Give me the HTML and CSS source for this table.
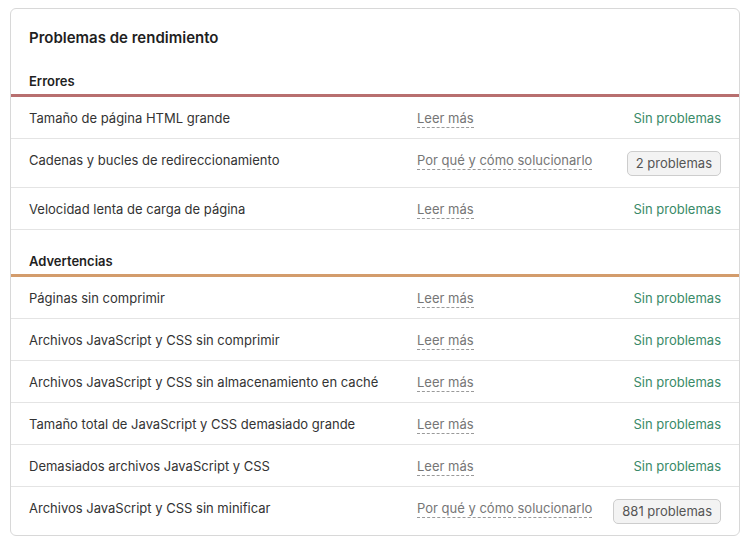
FILE: index.html
```html
<!DOCTYPE html>
<html lang="es">
<head>
<meta charset="utf-8">
<link rel="stylesheet" href="styles.css">
</head>
<body>
<div class="card">
  <h1 class="title">Problemas de rendimiento</h1>

  <div class="section-head errors">Errores</div>
  <div class="row">
    <div class="name">Tamaño de página HTML grande</div>
    <div class="link"><span>Leer más</span></div>
    <div class="status ok">Sin problemas</div>
  </div>
  <div class="row tall">
    <div class="name">Cadenas y bucles de redireccionamiento</div>
    <div class="link"><span>Por qué y cómo solucionarlo</span></div>
    <div class="status"><span class="badge">2 problemas</span></div>
  </div>
  <div class="row">
    <div class="name">Velocidad lenta de carga de página</div>
    <div class="link"><span>Leer más</span></div>
    <div class="status ok">Sin problemas</div>
  </div>

  <div class="section-head warnings">Advertencias</div>
  <div class="row">
    <div class="name">Páginas sin comprimir</div>
    <div class="link"><span>Leer más</span></div>
    <div class="status ok">Sin problemas</div>
  </div>
  <div class="row">
    <div class="name">Archivos JavaScript y CSS sin comprimir</div>
    <div class="link"><span>Leer más</span></div>
    <div class="status ok">Sin problemas</div>
  </div>
  <div class="row">
    <div class="name">Archivos JavaScript y CSS sin almacenamiento en caché</div>
    <div class="link"><span>Leer más</span></div>
    <div class="status ok">Sin problemas</div>
  </div>
  <div class="row">
    <div class="name">Tamaño total de JavaScript y CSS demasiado grande</div>
    <div class="link"><span>Leer más</span></div>
    <div class="status ok">Sin problemas</div>
  </div>
  <div class="row">
    <div class="name">Demasiados archivos JavaScript y CSS</div>
    <div class="link"><span>Leer más</span></div>
    <div class="status ok">Sin problemas</div>
  </div>
  <div class="row tall last">
    <div class="name">Archivos JavaScript y CSS sin minificar</div>
    <div class="link"><span>Por qué y cómo solucionarlo</span></div>
    <div class="status"><span class="badge">881 problemas</span></div>
  </div>
</div>
</body>
</html>
```

FILE: styles.css
```css
* { box-sizing: border-box; }
html, body { margin: 0; padding: 0; background: #ffffff; }
body {
  padding: 8px 10px;
  font-family: Inter, "Noto Sans", "Liberation Sans", sans-serif;
  font-size: 13px;
  color: #2b2b2b;
}
.card {
  width: 730px;
  border: 1px solid #d8d8d8;
  border-radius: 6px;
  overflow: hidden;
}
.title {
  margin: 0;
  padding: 19px 18px 0;
  font-size: 15px;
  line-height: 20px;
  font-weight: 600;
  color: #1f1f1f;
}
.section-head {
  padding: 25px 18px 5px;
  font-size: 13px;
  line-height: 16px;
  font-weight: 600;
  color: #1f1f1f;
}
.section-head.errors { border-bottom: 3px solid #b86f6f; }
.section-head.warnings { padding-top: 23px; border-bottom: 3px solid #d39c6c; }
.row {
  display: grid;
  grid-template-columns: 388px 1fr auto;
  align-items: center;
  min-height: 42px;
  padding: 0 18px;
  border-bottom: 1px solid #e4e4e4;
  line-height: 16px;
}
.row.tall {
  align-items: start;
  padding-top: 12px;
  padding-bottom: 11px;
}
.row.tall .name,
.row.tall .link { padding-top: 1px; }
.row.last { border-bottom: none; }
.name { color: #333333; }
.link { color: #767676; }
.link span {
  border-bottom: 1px dashed #9a9a9a;
  padding-bottom: 1px;
}
.status { text-align: right; }
.status.ok { color: #3a8a68; }
.badge {
  display: inline-block;
  padding: 3px 8px;
  line-height: 17px;
  border: 1px solid #cdcdcd;
  border-radius: 5px;
  background: #f3f3f3;
  color: #555555;
}
```
